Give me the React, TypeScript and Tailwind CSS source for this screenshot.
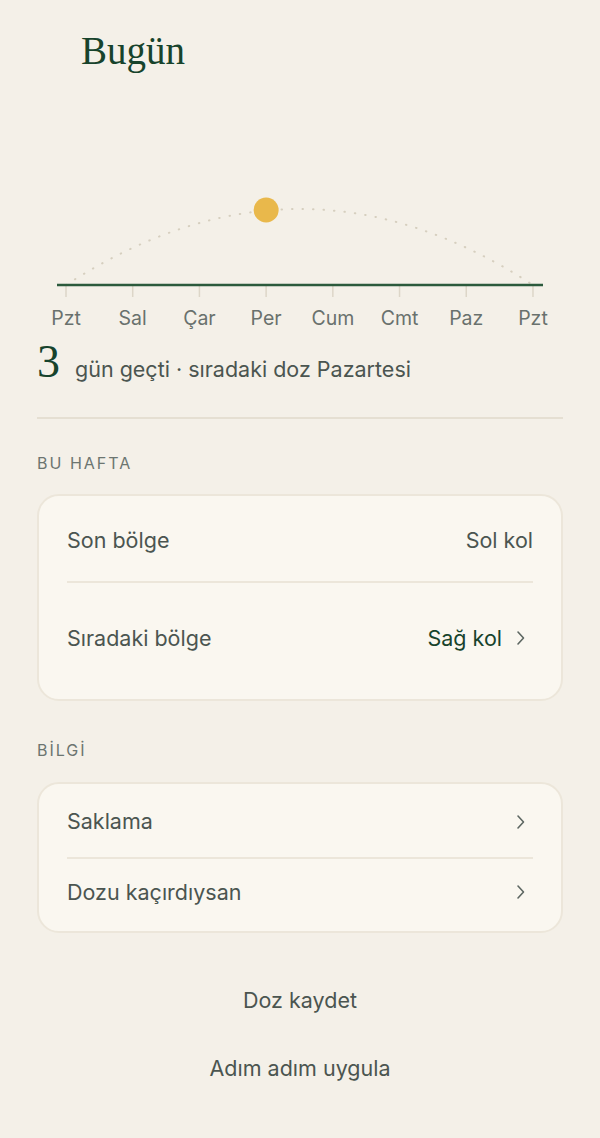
import React from "react";

const days = ["Pzt", "Sal", "Çar", "Per", "Cum", "Cmt", "Paz", "Pzt"];
const serif = { fontFamily: "'Liberation Serif', 'DejaVu Serif', serif" };

function Chevron() {
  return (
    <svg width="14" height="16" viewBox="0 0 14 16" fill="none" className="mr-[5px] shrink-0">
      <path d="M4 2 L9.5 8 L4 14" stroke="#5d6762" strokeWidth="1.6" strokeLinecap="round" strokeLinejoin="round" />
    </svg>
  );
}

export default function App() {
  const xs = days.map((_, i) => 29 + i * 66.71);
  return (
    <div className="min-h-[1138px] w-full bg-[#f4f0e8] px-[37px] pt-[28px] pb-10" style={{ fontFamily: "Inter, 'Liberation Sans', sans-serif" }}>
      <h1 className="pl-[44px] text-[39px] leading-[46px] text-[#17432c]" style={{ ...serif, fontWeight: 400 }}>
        Bugün
      </h1>

      <div className="mt-[96px]">
        <svg width="526" height="120" viewBox="0 0 526 120" className="block overflow-visible">
          <path d="M29 115 Q263 -37 496 115" stroke="#d6cfbf" strokeWidth="2" strokeDasharray="0.5 10" strokeLinecap="round" fill="none" />
          {xs.map((x, i) => (
            <line key={i} x1={x} y1={115} x2={x} y2={127} stroke="#ddd6c8" strokeWidth="1.5" />
          ))}
          <line x1="20" y1="115" x2="506" y2="115" stroke="#2b5a3c" strokeWidth="2.5" />
          <circle cx={xs[3]} cy={40} r={12.5} fill="#e9b84b" />
        </svg>
        <div className="relative mt-[16px] h-[24px]">
          {days.map((d, i) => (
            <span
              key={i}
              className="absolute top-0 -translate-x-1/2 text-[19.5px] leading-[24px] text-[#69716d]"
              style={{ left: xs[i] }}
            >
              {d}
            </span>
          ))}
        </div>
      </div>

      <div className="mt-[6px] flex h-[52px] items-baseline gap-[15px]">
        <span className="text-[46px] leading-[52px] text-[#17432c]" style={serif}>3</span>
        <span className="text-[21.5px] text-[#4b5550]">gün geçti · sıradaki doz Pazartesi</span>
      </div>

      <div className="mt-[29px] h-[2px] bg-[#e5dfd2]" />

      <div className="mt-[34px] text-[16px] leading-[20px] tracking-[2px] text-[#6c7570]">BU HAFTA</div>

      <div className="mt-[21px] rounded-[22px] border-2 border-[#ece6da] bg-[#faf7f0] px-[28px]">
        <div className="flex h-[85px] items-center justify-between pt-[3px] text-[21.5px] text-[#4b5550]">
          <span>Son bölge</span>
          <span>Sol kol</span>
        </div>
        <div className="h-[2px] bg-[#ece6da]" />
        <div className="flex h-[116px] items-center justify-between pb-[6px] text-[21.5px] text-[#4b5550]">
          <span>Sıradaki bölge</span>
          <span className="flex items-center gap-[12px] text-[#17432c]">
            Sağ kol
            <Chevron />
          </span>
        </div>
      </div>

      <div className="mt-[39px] text-[16px] leading-[20px] tracking-[2px] text-[#6c7570]">BİLGİ</div>

      <div className="mt-[22px] rounded-[22px] border-2 border-[#ece6da] bg-[#faf7f0] px-[28px]">
        <div className="flex h-[73px] items-center justify-between pt-[2px] text-[21.5px] text-[#4b5550]">
          <span>Saklama</span>
          <Chevron />
        </div>
        <div className="h-[2px] bg-[#ece6da]" />
        <div className="flex h-[72px] items-center justify-between pb-[6px] text-[21.5px] text-[#4b5550]">
          <span>Dozu kaçırdıysan</span>
          <Chevron />
        </div>
      </div>

      <div className="mt-[50px] flex flex-col items-center">
        <button className="h-[34px] text-[21.5px] text-[#4b5550]">Doz kaydet</button>
        <button className="mt-[34px] h-[34px] text-[21.5px] text-[#4b5550]">Adım adım uygula</button>
      </div>
    </div>
  );
}
